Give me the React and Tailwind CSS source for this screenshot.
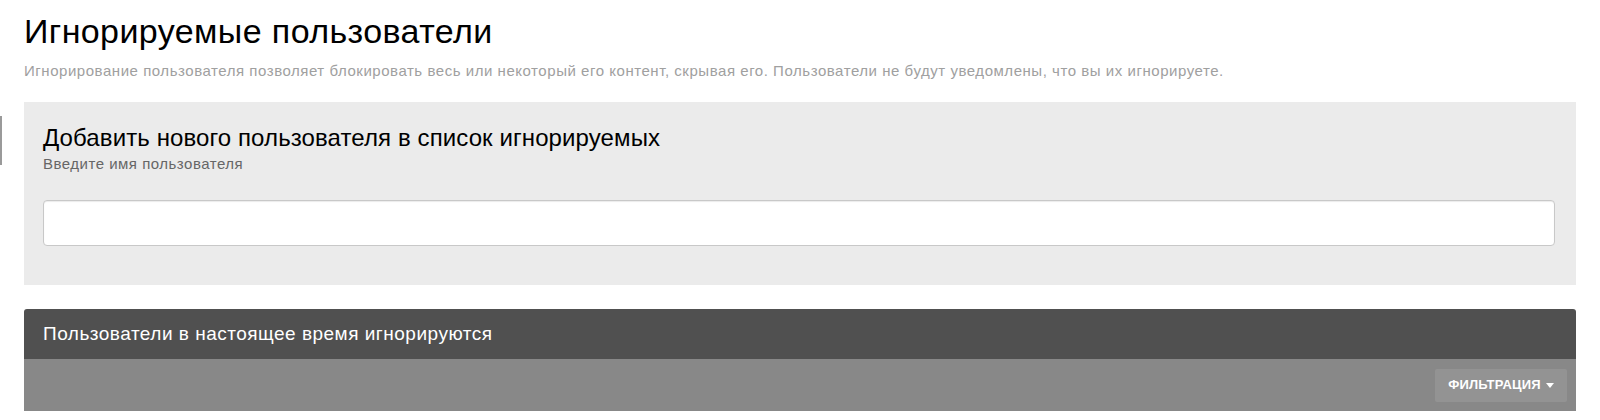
import React from "react";

export default function App() {
  return (
    <div
      className="relative w-[1600px] h-[420px] bg-white overflow-hidden"
      style={{ fontFamily: '"Liberation Sans", Arial, sans-serif' }}
    >
      <div className="absolute left-0 top-[116px] w-[2px] h-[49px] bg-[#9a9a9a]" />
      <div className="pl-[24px] pr-[24px] pt-[11px]">
        <h1 className="text-[34px] leading-[40px] tracking-[0.4px] text-black font-normal">
          Игнорируемые пользователи
        </h1>
        <p className="mt-[10px] text-[15px] leading-[20px] tracking-[0.54px] text-[#a0a0a0]">
          Игнорирование пользователя позволяет блокировать весь или некоторый его контент, скрывая его. Пользователи не будут уведомлены, что вы их игнорируете.
        </p>

        <div className="mt-[21px] bg-[#ebebeb] pt-[21px] pb-[39px] pl-[19px] pr-[21px]">
          <h2 className="text-[24px] leading-[30px] tracking-[0.1px] text-black font-normal">
            Добавить нового пользователя в список игнорируемых
          </h2>
          <div className="mt-[2px] text-[15px] leading-[18px] tracking-[0.5px] text-[#666]">
            Введите имя пользователя
          </div>
          <input
            type="text"
            className="mt-[27px] block w-full h-[46px] bg-white border border-[#c8c8c8] rounded-[4px] shadow-[inset_0_1px_1px_rgba(0,0,0,0.08)] outline-none"
          />
        </div>

        <div className="mt-[24px]">
          <div className="h-[50px] bg-[#505050] rounded-t-[3px] flex items-center px-[19px]">
            <span className="text-white text-[19px] tracking-[0.5px]">
              Пользователи в настоящее время игнорируются
            </span>
          </div>
          <div className="h-[52px] bg-[#888888] flex items-center justify-end pr-[9px]">
            <button className="h-[33px] w-[132px] justify-center bg-[#939393] rounded-[2px] flex items-center gap-[5px] text-white text-[13px] tracking-[0.2px] font-bold uppercase">
              Фильтрация
              <svg width="8" height="5" viewBox="0 0 8 5" className="mt-[1px]">
                <path d="M0 0 L8 0 L4 5 Z" fill="white" />
              </svg>
            </button>
          </div>
        </div>
      </div>
    </div>
  );
}
